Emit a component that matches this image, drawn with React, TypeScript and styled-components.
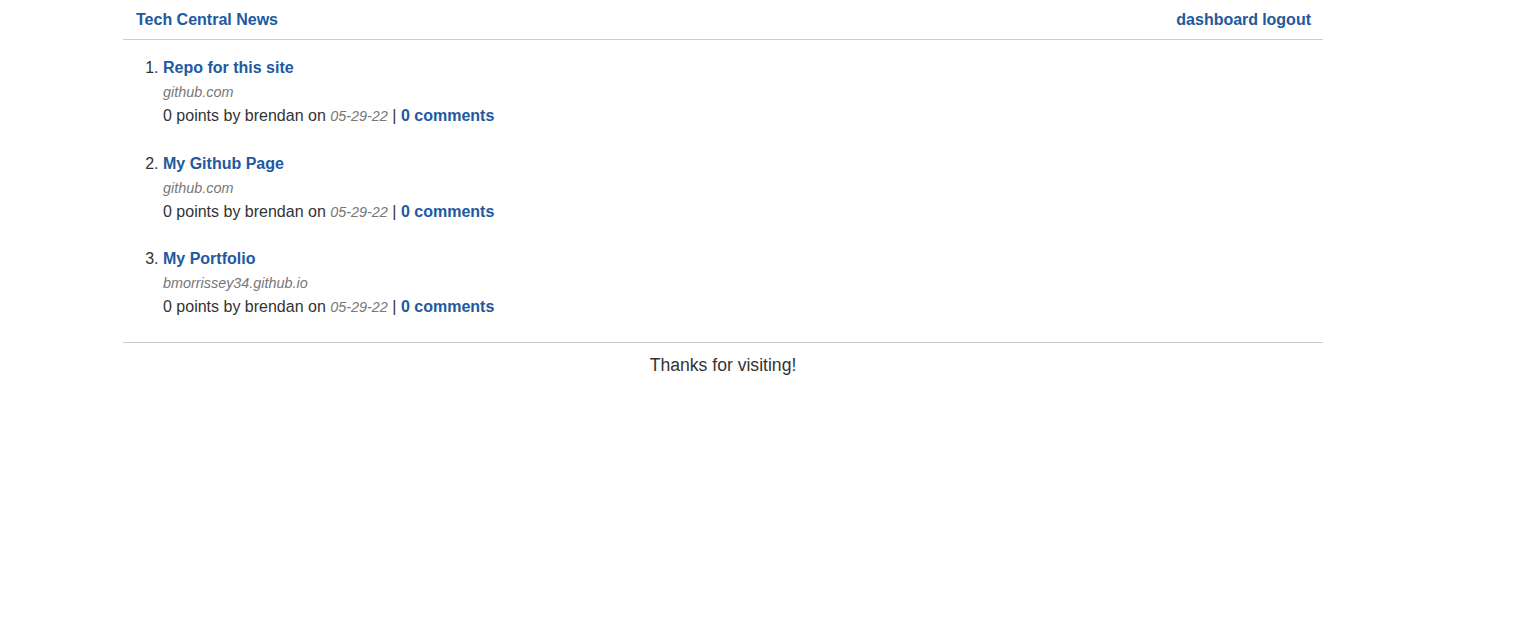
import React from "react";
import styled, { createGlobalStyle } from "styled-components";

const Global = createGlobalStyle`
  html, body { margin: 0; padding: 0; background: #fff; }
  body { font-family: "Liberation Sans", Arial, sans-serif; color: #333; }
`;

const Page = styled.div`
  width: 1200px;
  margin-left: 123px;
`;

const Header = styled.header`
  display: flex;
  justify-content: space-between;
  align-items: center;
  height: 39px;
  padding: 0 12px 0 13px;
  border-bottom: 1px solid #ccc;
`;

const NavLink = styled.a`
  color: #2159a0;
  font-weight: bold;
  font-size: 16px;
  text-decoration: none;
`;

const NavGroup = styled.nav`
  display: flex;
  gap: 4px;
`;

const List = styled.ol`
  margin: 16px 0 0;
  padding-left: 40px;
  font-size: 16px;
`;

const Item = styled.li`
  margin-bottom: 23.5px;
  line-height: 24px;
  &:last-child {
    margin-bottom: 23px;
  }
`;

const Title = styled.a`
  display: inline-block;
  color: #2159a0;
  font-weight: bold;
  text-decoration: none;
`;

const Domain = styled.div`
  font-size: 14.4px;
  font-style: italic;
  color: #777;
`;

const Meta = styled.div`
  color: #333;
`;

const Date = styled.span`
  font-size: 14.4px;
  font-style: italic;
  color: #777;
`;

const Comments = styled.a`
  color: #2159a0;
  font-weight: bold;
  text-decoration: none;
`;

const Footer = styled.footer`
  border-top: 1px solid #ccc;
  text-align: center;
  font-size: 17.6px;
  line-height: 22px;
  padding-top: 11px;
  color: #333;
`;

const posts = [
  { title: "Repo for this site", domain: "github.com" },
  { title: "My Github Page", domain: "github.com" },
  { title: "My Portfolio", domain: "bmorrissey34.github.io" },
];

export default function App() {
  return (
    <>
      <Global />
      <Page>
        <Header>
          <NavLink href="#">Tech Central News</NavLink>
          <NavGroup>
            <NavLink href="#">dashboard</NavLink>
            <NavLink href="#">logout</NavLink>
          </NavGroup>
        </Header>
        <List>
          {posts.map((p) => (
            <Item key={p.title}>
              <Title href="#">{p.title}</Title>
              <Domain>{p.domain}</Domain>
              <Meta>
                0 points by brendan on <Date>05-29-22</Date> |{" "}
                <Comments href="#">0 comments</Comments>
              </Meta>
            </Item>
          ))}
        </List>
        <Footer>Thanks for visiting!</Footer>
      </Page>
    </>
  );
}
